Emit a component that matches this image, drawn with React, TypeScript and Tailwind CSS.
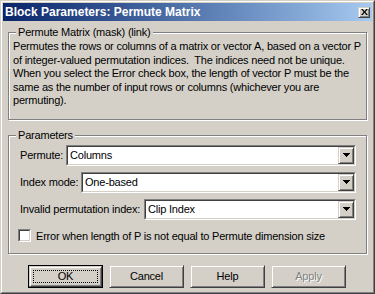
import React from 'react';

const font = "font-['Liberation_Sans',Arial,sans-serif] text-[11px] tracking-[-0.2px] text-black";

const raised =
  'border border-t-[#D4D0C8] border-l-[#D4D0C8] border-r-[#404040] border-b-[#404040] shadow-[inset_1px_1px_0_#fff,inset_-1px_-1px_0_#808080] bg-[#D4D0C8]';

const Dropdown = ({ value, width }: { value: string; width: string }) => (
  <div className={`${width} h-[21px] bg-white border border-t-[#808080] border-l-[#808080] border-r-white border-b-white`}>
    <div className="h-full flex items-stretch border border-t-[#404040] border-l-[#404040] border-r-[#D4D0C8] border-b-[#D4D0C8]">
      <span className="flex-1 flex items-center pl-[2px] leading-none">{value}</span>
      <div className={`w-[16px] flex items-center justify-center ${raised}`}>
        <svg width="7" height="4" viewBox="0 0 7 4">
          <path d="M0 0h7v1H0zM1 1h5v1H1zM2 2h3v1H2zM3 3h1v1H3z" fill="#000" />
        </svg>
      </div>
    </div>
  </div>
);

const GroupBox = ({ title, className, children }: { title: string; className: string; children: React.ReactNode }) => (
  <div className={`relative mx-[5px] border border-[#808080] shadow-[inset_1px_1px_0_#fff,1px_1px_0_#fff] ${className}`}>
    <span className="absolute left-[7px] top-[-8px] px-[2px] bg-[#D4D0C8] leading-[14px]">{title}</span>
    {children}
  </div>
);

const Button = ({ label, primary, disabled }: { label: string; primary?: boolean; disabled?: boolean }) => (
  <div className={`w-[75px] h-[23px] ${primary ? 'border border-black' : ''}`}>
    <div className={`h-full flex items-center justify-center ${raised} ${primary ? 'p-[3px]' : ''}`}>
      {primary ? (
        <div className="w-full h-full border border-dotted border-black flex items-center justify-center">{label}</div>
      ) : (
        <span className={disabled ? 'text-[#808080] [text-shadow:1px_1px_0_#fff]' : ''}>{label}</span>
      )}
    </div>
  </div>
);

export default function App() {
  return (
    <div className={`w-[375px] h-[294px] bg-[#D4D0C8] border border-t-[#D4D0C8] border-l-[#D4D0C8] border-r-[#404040] border-b-[#404040] ${font}`}>
      <div className="h-full border border-t-white border-l-white border-r-[#808080] border-b-[#808080] p-[1px] flex flex-col">
        {/* title bar */}
        <div className="h-[18px] shrink-0 flex items-center justify-between pl-[2px] pr-[2px] bg-gradient-to-r from-[#0A246A] to-[#A6CAF0]">
          <span className="text-white font-bold text-[12px] tracking-normal leading-none">Block Parameters: Permute Matrix</span>
          <div className={`w-[12px] h-[11px] flex items-center justify-center ${raised}`}>
            <svg width="7" height="6" viewBox="0 0 8 7">
              <path d="M0 0h2l2 2.5L6 0h2L5 3.5 8 7H6L4 4.5 2 7H0l3-3.5z" fill="#000" />
            </svg>
          </div>
        </div>

        <GroupBox title="Permute Matrix (mask) (link)" className="mt-[11px] pt-[7px] pl-[4px] pb-[11px]">
          <p className="leading-[13.5px] whitespace-pre">
            Permutes the rows or columns of a matrix or vector A, based on a vector P
            <br />
            of integer-valued permutation indices.  The indices need not be unique.
            <br />
            When you select the Error check box, the length of vector P must be the
            <br />
            same as the number of input rows or columns (whichever you are
            <br />
            permuting).
          </p>
        </GroupBox>

        <GroupBox title="Parameters" className="mt-[15px] pt-[9px] pl-[11px] pr-[10px] pb-[9px]">
          <div className="flex flex-col gap-[6px]">
            <div className="flex items-center justify-between">
              <span>Permute:</span>
              <Dropdown value="Columns" width="w-[290px]" />
            </div>
            <div className="flex items-center justify-between">
              <span>Index mode:</span>
              <Dropdown value="One-based" width="w-[275px]" />
            </div>
            <div className="flex items-center justify-between">
              <span>Invalid permutation index:</span>
              <Dropdown value="Clip Index" width="w-[212px]" />
            </div>
          </div>
          <div className="flex items-center gap-[5px] mt-[8px] -ml-[2px]">
            <div className="w-[13px] h-[13px] bg-white border border-t-[#808080] border-l-[#808080] border-r-white border-b-white">
              <div className="w-full h-full border border-t-[#404040] border-l-[#404040] border-r-[#D4D0C8] border-b-[#D4D0C8]" />
            </div>
            <span>Error when length of P is not equal to Permute dimension size</span>
          </div>
        </GroupBox>

        <div className="flex gap-[6px] pl-[25px] mt-[11px]">
          <Button label="OK" primary />
          <Button label="Cancel" />
          <Button label="Help" />
          <Button label="Apply" disabled />
        </div>
      </div>
    </div>
  );
}
